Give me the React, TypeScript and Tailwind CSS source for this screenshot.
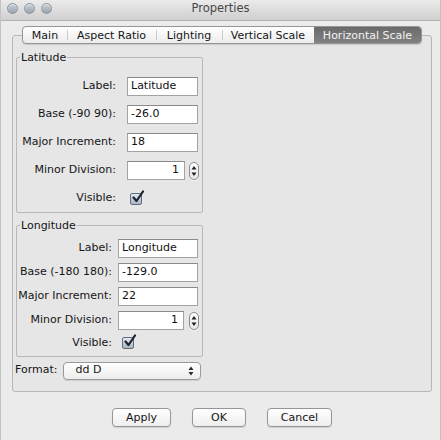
import React from "react";

const font = "font-['DejaVu_Sans','Liberation_Sans',sans-serif]";

function Spinner() {
  return (
    <div className="w-[10px] h-[18px] rounded-[5px] border border-[#8c8c8c] bg-gradient-to-b from-[#ffffff] to-[#e6e6e6] flex items-center justify-center shadow-[0_1px_0_rgba(255,255,255,0.6)]">
      <svg width="6" height="12" viewBox="0 0 6 12">
        <path d="M3 1 L5.5 4.5 L0.5 4.5 Z" fill="#1e1e1e" />
        <path d="M3 11 L5.5 7.5 L0.5 7.5 Z" fill="#1e1e1e" />
      </svg>
    </div>
  );
}

function Check() {
  return (
    <div className="relative w-[12px] h-[12px] border border-[#5f6c7b] rounded-[2px] bg-gradient-to-b from-[#e3e9f0] to-[#a9b5c3]">
      <svg className="absolute left-[0px] top-[-4px]" width="14" height="14" viewBox="0 0 14 14">
        <path d="M2.5 7.5 L5.5 11 L12 1.5" fill="none" stroke="#1b2430" strokeWidth="2.2" strokeLinecap="round" strokeLinejoin="round" />
      </svg>
    </div>
  );
}

function TextInput({ value, w, right }: { value: string; w: string; right?: boolean }) {
  return (
    <div
      className={`${w} h-[19px] bg-white border border-[#a3a3a3] border-t-[#8a8a8a] flex items-center text-[11px] text-[#111] ${
        right ? "justify-end pr-[5px]" : "pl-[3px]"
      }`}
    >
      {value}
    </div>
  );
}

export default function App() {
  const tabs = [
    { t: "Main", w: "w-[44px]" },
    { t: "Aspect Ratio", w: "w-[89px]" },
    { t: "Lighting", w: "w-[66px]" },
    { t: "Vertical Scale", w: "w-[92px]" },
    { t: "Horizontal Scale", w: "w-[107px]", sel: true },
  ];
  return (
    <div className={`w-[441px] h-[440px] bg-[#ebebeb] border-x border-[#c2c2c2] flex flex-col ${font} text-[11px] text-[#151515]`}>
      {/* title bar */}
      <div className="h-[21px] bg-gradient-to-b from-[#ebebeb] to-[#cfcfcf] border-b border-[#b3b3b3] grid grid-cols-[1fr_auto_1fr] items-start">
        <div className="flex gap-[6px] pl-[6px] pt-[3px]">
          {[0, 1, 2].map((i) => (
            <div
              key={i}
              className="w-[11px] h-[11px] rounded-full border border-[#8b939c] bg-gradient-to-b from-[#c9d0d7] to-[#9aa3ad] shadow-[inset_0_1px_1px_rgba(255,255,255,0.6)]"
            />
          ))}
        </div>
        <div className="text-[11.5px] leading-[17px] text-[#474747]">Properties</div>
        <div />
      </div>

      {/* tabs */}
      <div className="w-[420px] ml-[11px] mt-[5px] flex justify-center relative z-10">
        <div className="flex h-[18px] border border-[#959595] rounded-[4px] overflow-hidden bg-gradient-to-b from-[#ffffff] to-[#ececec] shadow-[0_1px_1px_rgba(0,0,0,0.12)]">
          {tabs.map((tab, i) => (
            <div
              key={tab.t}
              className={`${tab.w} flex items-center justify-center leading-none relative ${
                tab.sel ? "bg-gradient-to-b from-[#6a6a6a] to-[#828282] text-[#f2f2f2]" : "text-[#161616]"
              }`}
            >
              {i > 0 && !tab.sel && (
                <div className="absolute left-0 top-[3px] bottom-[3px] w-px bg-[#c9c9c9]" />
              )}
              {tab.t}
            </div>
          ))}
        </div>
      </div>

      {/* pane */}
      <div className="w-[420px] ml-[11px] -mt-[9px] h-[357px] border border-[#b6b6b6] rounded-[3px] bg-[#e6e6e6] pt-[15px] pl-[1px] flex flex-col">
        <fieldset className="ml-[2px] w-[187px] border border-[#b8b8b8] rounded-[2px] px-0 pt-[13px] pb-[4px]">
          <legend className="ml-[3px] px-[1px] leading-[13px]">Latitude</legend>
          <div className="grid grid-cols-[99px_auto] gap-x-[11px] gap-y-[9px] items-center">
            <div className="text-right">Label:</div>
            <TextInput value="Latitude" w="w-[71px]" />
            <div className="text-right">Base (-90 90):</div>
            <TextInput value="-26.0" w="w-[71px]" />
            <div className="text-right">Major Increment:</div>
            <TextInput value="18" w="w-[71px]" />
            <div className="text-right">Minor Division:</div>
            <div className="flex items-center gap-[4px]">
              <TextInput value="1" w="w-[58px]" right />
              <Spinner />
            </div>
            <div className="text-right">Visible:</div>
            <div className="h-[19px] flex items-center pl-[3px]">
              <Check />
            </div>
          </div>
        </fieldset>

        <fieldset className="ml-[2px] mt-[6px] w-[187px] border border-[#b8b8b8] rounded-[2px] px-0 pt-[7px] pb-[4px]">
          <legend className="ml-[3px] px-[1px] leading-[13px]">Longitude</legend>
          <div className="grid grid-cols-[95px_auto] gap-x-[6px] gap-y-[5px] items-center">
            <div className="text-right">Label:</div>
            <TextInput value="Longitude" w="w-[80px]" />
            <div className="text-right">Base (-180 180):</div>
            <TextInput value="-129.0" w="w-[80px]" />
            <div className="text-right">Major Increment:</div>
            <TextInput value="22" w="w-[80px]" />
            <div className="text-right">Minor Division:</div>
            <div className="flex items-center gap-[5px]">
              <TextInput value="1" w="w-[66px]" right />
              <Spinner />
            </div>
            <div className="text-right">Visible:</div>
            <div className="h-[13px] flex items-center pl-[4px]">
              <Check />
            </div>
          </div>
        </fieldset>

        <div className="mt-[5px] pl-[1px] flex items-center gap-[6px]">
          <div>Format:</div>
          <div className="w-[138px] h-[18px] rounded-[4px] border border-[#9a9a9a] bg-gradient-to-b from-[#ffffff] to-[#ededed] shadow-[0_1px_1px_rgba(0,0,0,0.1)] flex items-center justify-between pl-[11px] pr-[6px]">
            <span>dd D</span>
            <svg width="6" height="10" viewBox="0 0 6 10">
              <path d="M3 0.5 L5.5 4 L0.5 4 Z" fill="#2a2a2a" />
              <path d="M3 9.5 L5.5 6 L0.5 6 Z" fill="#2a2a2a" />
            </svg>
          </div>
        </div>
      </div>

      {/* buttons */}
      <div className="w-[420px] ml-[11px] mt-[16px] flex justify-center gap-[21px]">
        {[
          { t: "Apply", w: "w-[59px]" },
          { t: "OK", w: "w-[54px]" },
          { t: "Cancel", w: "w-[65px]" },
        ].map((b) => (
          <div
            key={b.t}
            className={`${b.w} h-[19px] rounded-[4px] border border-[#969696] bg-gradient-to-b from-[#ffffff] to-[#eeeeee] shadow-[0_1px_1px_rgba(0,0,0,0.12)] flex items-center justify-center leading-none`}
          >
            {b.t}
          </div>
        ))}
      </div>
    </div>
  );
}
